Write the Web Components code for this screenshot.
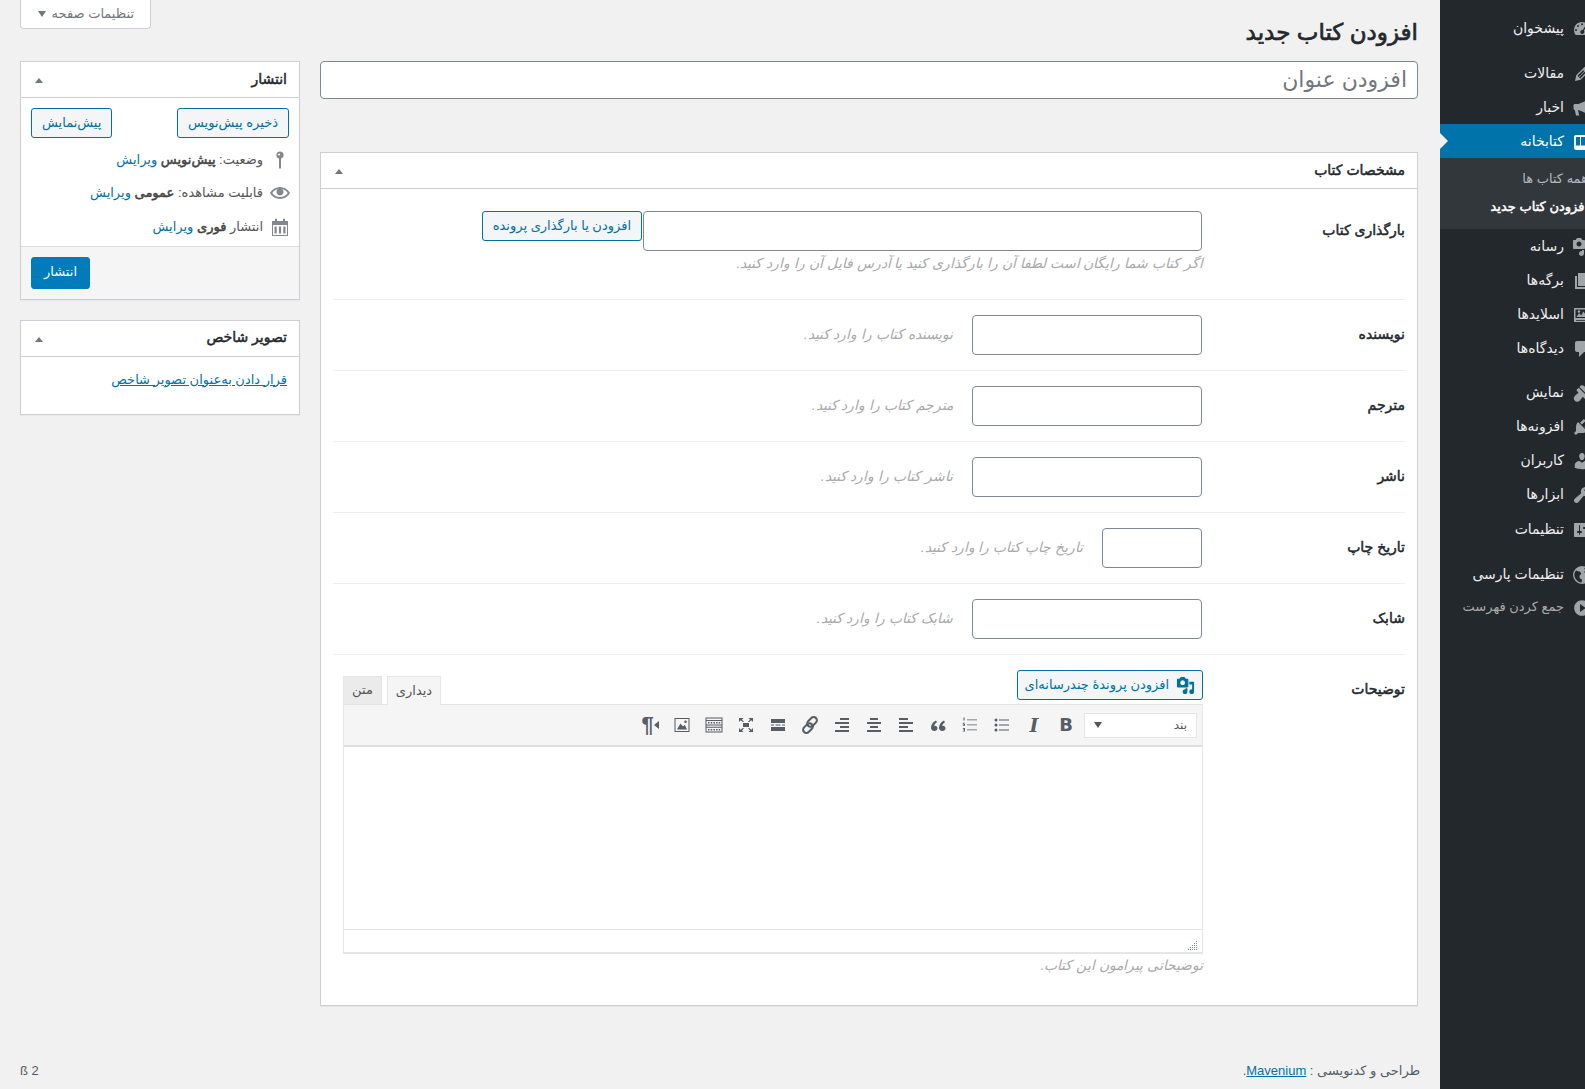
<!DOCTYPE html>
<html lang="fa">
<head>
<meta charset="utf-8">
<title>افزودن کتاب جدید</title>
<style>
  html, body { margin: 0; padding: 0; background: #f1f1f1; overflow: hidden; }
  body { font: 13px/1.4 "Liberation Sans", "DejaVu Sans", sans-serif; color: #444; }
</style>
</head>
<body>
<wp-app>
  <wp-main slot="main">
    <wp-header slot="header"></wp-header>
    <div slot="wide" class="wide-col">
      <wp-title-box></wp-title-box>
      <wp-postbox heading="مشخصات کتاب">
        <wp-field label="بارگذاری کتاب" first>
          <wp-upload></wp-upload>
        </wp-field>
        <wp-field label="نویسنده"><wp-input width="230" hint="نویسنده کتاب را وارد کنید."></wp-input></wp-field>
        <wp-field label="مترجم"><wp-input width="230" hint="مترجم کتاب را وارد کنید."></wp-input></wp-field>
        <wp-field label="ناشر"><wp-input width="230" hint="ناشر کتاب را وارد کنید."></wp-input></wp-field>
        <wp-field label="تاریخ چاپ"><wp-input width="100" hint="تاریخ چاپ کتاب را وارد کنید."></wp-input></wp-field>
        <wp-field label="شابک"><wp-input width="230" hint="شابک کتاب را وارد کنید."></wp-input></wp-field>
        <wp-field label="توضیحات" last><wp-editor></wp-editor></wp-field>
      </wp-postbox>
    </div>
    <div slot="side" class="side-col">
      <wp-postbox heading="انتشار"><wp-publish></wp-publish></wp-postbox>
      <wp-postbox heading="تصویر شاخص"><wp-thumbnail></wp-thumbnail></wp-postbox>
    </div>
    <wp-footer slot="footer"></wp-footer>
  </wp-main>
  <wp-sidebar slot="side"></wp-sidebar>
</wp-app>

<script>
// dashicon style shapes, all on a 20x20 box
const ICONS = {
  dashboard: '<path fill-rule="evenodd" d="M3.76 16h12.48c1.1-1.37 1.76-3.11 1.76-5 0-4.42-3.58-8-8-8s-8 3.58-8 8c0 1.89.66 3.63 1.76 5zM10 4.2a1 1 0 1 1 0 2 1 1 0 0 1 0-2zM6 6a1 1 0 1 1 0 2 1 1 0 0 1 0-2zM4 10a1 1 0 1 1 0 2 1 1 0 0 1 0-2zm10-4l1 .6-3.2 5a2 2 0 1 1-1-.6z"/>',
  post: '<path fill-rule="evenodd" d="M13.89 3.39l2.71 2.72c.46.46.42 1.24.03 1.64l-8.01 8.02-5.56 1.16 1.16-5.58s7.6-7.63 7.99-8.03c.39-.39 1.22-.39 1.68.07zm-2.73 2.79l-5.59 5.61 1.11 1.11 5.54-5.65zm-2.97 8.23l5.58-5.6-1.07-1.08-5.59 5.6z"/>',
  news: '<path d="M1.500 7.500c0-1 .8-1.500 1.500-1.500h3.500L16 2v14l-9.500-4H6l1.200 5.500H4L2.800 12H3c-.8 0-1.500-.7-1.500-1.500z"/>',
  book: '<path fill-rule="evenodd" d="M2 5c0-1.100.9-2 2-2h16v15H4c-1.100 0-2-.9-2-2zm2 0v8.500h4V5zm5 0v8.500h11V5z"/>',
  media: '<path fill-rule="evenodd" d="M13 11V4c0-.55-.45-1-1-1h-1.67L9 1H5L3.67 3H2c-.55 0-1 .45-1 1v7c0 .55.45 1 1 1h10c.55 0 1-.45 1-1zM7 4.5c1.38 0 2.5 1.12 2.5 2.5S8.38 9.5 7 9.5 4.5 8.38 4.5 7 5.62 4.5 7 4.5zM14 6h5v10.5c0 1.38-1.12 2.5-2.5 2.5S14 17.88 14 16.5s1.12-2.5 2.5-2.5c.17 0 .34.02.5.05V9h-3V6zm-4 8.05V13h2v3.5c0 1.38-1.12 2.5-2.5 2.5S7 17.88 7 16.5 8.12 14 9.5 14c.17 0 .34.02.5.05z"/>',
  page: '<path d="M6 15V2h10v13H6zm-1 1h8v2H3V5h2v11z"/>',
  slides: '<path fill-rule="evenodd" d="M2 3h16v14H2zm1.500 1.500v8.500h13V4.500zM4.500 12l2.600-4 2 2.400 2.400-3.900 3.600 5.500zM7 5.200a1.300 1.300 0 1 1 0 2.600 1.300 1.300 0 0 1 0-2.600zM4 15h12v.8H4z"/>',
  comment: '<path d="M5 2h9c1.1 0 2 .9 2 2v7c0 1.1-.9 2-2 2h-2l-5 5v-5H5c-1.1 0-2-.9-2-2V4c0-1.1.9-2 2-2z"/>',
  brush: '<path d="M14.48 11.06L7.41 3.99l1.5-1.5c.5-.56 2.3-.47 3.54.77 1.24 1.25 1.35 3.03.77 3.54l1.26 4.26zm-.71.71L6.7 4.7 4.93 6.47c-.39.39-.39 1.02 0 1.41l1.06 1.06c.39.39.39 1.03 0 1.42-.6.6-1.43 1.11-2.21 1.69-.35.26-.7.53-1.01.84-1.34 1.34-1.34 3.61 0 4.95 1.34 1.34 3.61 1.34 4.95 0 .31-.31.58-.66.84-1.01.58-.78 1.09-1.61 1.69-2.21.39-.39 1.03-.39 1.42 0l1.06 1.06c.39.39 1.02.39 1.41 0z"/>',
  plugin: '<path d="M13.11 4.36L9.87 7.6 8 5.73l3.24-3.24c.35-.34 1.05-.2 1.56.32.52.51.66 1.21.31 1.55zm-8 1.77l.91-1.12 9.01 9.01-1.19.84c-.71.71-2.63 1.16-3.82 1.16H6.14L4.9 17.26c-.59.59-1.54.59-2.12 0-.59-.58-.59-1.53 0-2.12l1.24-1.24v-3.88c0-1.13.4-3.19 1.09-3.89zm7.26 3.97l3.24-3.24c.34-.35 1.04-.21 1.55.31.52.51.66 1.21.31 1.55l-3.24 3.25z"/>',
  users: '<path d="M10 9.25c-2.27 0-2.73-3.44-2.73-3.44C7 4.02 7.82 2 9.97 2c2.16 0 2.98 2.02 2.71 3.81 0 0-.41 3.44-2.68 3.44zm0 2.57L12.72 10c2.39 0 4.52 2.33 4.52 4.53v2.49s-3.65 1.13-7.24 1.13c-3.65 0-7.24-1.13-7.24-1.13v-2.49c0-2.25 1.94-4.48 4.47-4.48z"/>',
  tools: '<path d="M16.68 9.77c-1.34 1.34-3.3 1.67-4.95.99l-5.41 6.52c-.99.99-2.59.99-3.58 0s-.99-2.59 0-3.57l6.52-5.42c-.68-1.65-.35-3.61.99-4.95 1.28-1.28 3.12-1.62 4.72-1.06l-2.89 2.89 2.82 2.82 2.86-2.87c.53 1.58.18 3.39-1.08 4.67z"/>',
  settings: '<path fill-rule="evenodd" d="M18 16V4c0-.55-.45-1-1-1H3c-.55 0-1 .45-1 1v12c0 .55.45 1 1 1h14c.55 0 1-.45 1-1zM8 11h1c.55 0 1 .45 1 1s-.45 1-1 1H8v1.5c0 .28-.22.5-.5.5s-.5-.22-.5-.5V13H6c-.55 0-1-.45-1-1s.45-1 1-1h1V5.5c0-.28.22-.5.5-.5s.5.22.5.5V11zm5-2h-1c-.55 0-1-.45-1-1s.45-1 1-1h1V5.5c0-.28.22-.5.5-.5s.5.22.5.5V7h1c.55 0 1 .45 1 1s-.45 1-1 1h-1v5.5c0 .28-.22.5-.5.5s-.5-.22-.5-.5V9z"/>',
  globe: '<path fill-rule="evenodd" d="M10 1a9 9 0 1 1 0 18 9 9 0 0 1 0-18zM4 5.5c1.400.4 2.400 1.100 4 1.100l1.300 2.100-2 2.300.7 2.500 2 1-.5 3.200C6 17 2.400 14 2.400 10c0-1.700.6-3.200 1.600-4.500zM12 3l1.500 2.500L12 7l2.500 2 3-.5C17 6 15 3.800 12 3zm1 9l2.500-.5.5 3-2.500 2z"/>',
  collapse: '<path fill-rule="evenodd" d="M10 2.160c4.330 0 7.840 3.510 7.840 7.840s-3.510 7.840-7.840 7.840S2.160 14.330 2.160 10 5.710 2.160 10 2.160zM8 13.880V6.120L13.820 9.970z"/>',
  pin: '<path fill-rule="evenodd" d="M10 1.500a3.600 3.600 0 0 1 1 7.060V18.500H9V8.560A3.600 3.600 0 0 1 10 1.500zM9 3.500a1 1 0 1 0 0 2 1 1 0 0 0 0-2z"/>',
  eye: '<path d="M19.7 9.400C17.700 6 14 3.900 10 3.900S2.300 6 .3 9.400L0 10l.3.6c2 3.400 5.700 5.500 9.700 5.500s7.700-2.100 9.700-5.500l.3-.6-.3-.6zM10 14.100c-3.100 0-6-1.600-7.700-4.100C3.600 8 5.700 6.600 8 6.100c-.9.6-1.500 1.700-1.500 2.900 0 1.900 1.600 3.500 3.500 3.500s3.500-1.600 3.500-3.500c0-1.200-.6-2.300-1.500-2.900 2.300.5 4.400 1.900 5.700 3.900-1.700 2.500-4.600 4.100-7.700 4.100z"/>',
  calendar: '<path fill-rule="evenodd" d="M2 4h3V2.500a1 1 0 0 1 2 0V4h6V2.500a1 1 0 0 1 2 0V4h3v15H2zM3 8v10h14V8zM4.500 9.500h2.200v7H4.500zm4.400 0h2.200v7H8.900zm4.400 0h2.200v7h-2.200z"/>',
  alignleft: '<path d="M12 5V3H3v2h9zm5 4V7H3v2h14zm-5 4v-2H3v2h9zm5 4v-2H3v2h14z"/>',
  aligncenter: '<path d="M14 5V3H6v2h8zm3 4V7H3v2h14zm-3 4v-2H6v2h8zm3 4v-2H3v2h14z"/>',
  alignright: '<path d="M17 3H8v2h9V3zm0 4H3v2h14V7zm0 4H8v2h9v-2zm0 4H3v2h14v-2z"/>',
  quote: '<path d="M9.500 13.300c0-1.400-1.100-2.500-2.500-2.500-.3 0-.6.050-.9.150.3-1.400 1.300-2.800 2.900-3.700L8 5.500C5 7 3 9.700 3 12.700 3 14.600 4.400 16 6.300 16c1.800 0 3.200-1.200 3.200-2.700zm8 0c0-1.400-1.100-2.500-2.500-2.500-.3 0-.6.050-.9.150.3-1.400 1.300-2.800 2.900-3.700L16 5.500c-3 1.500-5 4.200-5 7.200 0 1.900 1.400 3.300 3.300 3.300 1.800 0 3.200-1.200 3.200-2.700z"/>',
  ul: '<circle cx="4" cy="5" r="1.500"/><circle cx="4" cy="10" r="1.500"/><circle cx="4" cy="15" r="1.500"/><path d="M7 4.400h10v1.200H7zm0 5h10v1.200H7zm0 5h10v1.200H7z"/>',
  ol: '<path d="M3.500 2.500h1v3h-1zm-.7 5.300h2v.7H3.700v.5h1.300v1.700H2.800v-.7h1.200v-.4H2.800zm0 5.200H5v3.500H2.800v-.7H4v-.7H3v-.6h1v-.7H2.800z"/><path d="M7 4.500h10v.8H7zm0 5h10v.8H7zm0 5h10v.8H7z"/>',
  link: '<g fill="none" stroke="currentColor" stroke-width="2"><rect x="8.700" y="1.400" width="6.500" height="11" rx="3.250" transform="rotate(45 12 7)"/><rect x="4.800" y="7.600" width="6.500" height="11" rx="3.250" transform="rotate(45 8 13)"/></g>',
  more: '<path d="M3 4h14v4H3zm0 8h14v4H3zM3 9.500h3v1H3zm4.500 0h5v1h-5zm6.500 0h3v1h-3z"/>',
  fullscreen: '<path d="M7 8h6v4H7zM3 3h4.500L6 4.500l2 2.500H6.800L4.700 5.200 3 7zm14 0v4l-1.700-1.800L13.200 7H12l2-2.500L12.500 3zM3 17v-4l1.700 1.800L6.800 13H8l-2 2.500L7.500 17zm14 0h-4.500l1.500-1.500L12 13h1.200l2.100 1.800L17 13z"/>',
  table: '<path fill-rule="evenodd" d="M1.500 2.500h17v15h-17zm1 1v1.500h15V3.500zm0 2.500v3.500h15V6zm0 4.500v1.200h15v-1.200zm0 2.200v3.800h15v-3.800zM4 7h1.500v1.500H4zm2.700 0h1.500v1.500H6.700zm2.700 0h1.500v1.500H9.400zm2.700 0h1.500v1.500h-1.500zm2.600 0h1.500v1.500h-1.500zM4 14h1.500v1.500H4zm2.700 0h1.500v1.500H6.700zm2.700 0h1.500v1.500H9.400zm2.700 0h1.500v1.500h-1.500zm2.600 0h1.500v1.500h-1.500z"/>',
  image: '<path fill-rule="evenodd" d="M2.500 3h15v14h-15zm1 1v12h13V4zM5 14.500l3.500-6 2.500 3 1.800-1.800 2.200 4.800zM13.500 5.500a1.300 1.300 0 1 1 0 2.600 1.300 1.300 0 0 1 0-2.600z"/>'
}

class WpIcon extends HTMLElement {
  static get observedAttributes() { return ['name'] }
  constructor() {
    super()
    this.attachShadow({mode: 'open'})
  }
  render() {
    const size = this.getAttribute('size') || 20
    this.shadowRoot.innerHTML = `
      <style>:host { display: inline-flex; flex: none; } svg { display: block; fill: currentColor; }</style>
      <svg width="${size}" height="${size}" viewBox="0 0 20 20">${ICONS[this.getAttribute('name')] || ''}</svg>`
  }
  connectedCallback() { this.render() }
  attributeChangedCallback() { this.render() }
}
customElements.define('wp-icon', WpIcon)

// the reference's bold is a thickened regular face, so it keeps the regular width
const BOLD = 'font-weight: 400; -webkit-text-stroke: .5px currentColor;'

class WpApp extends HTMLElement {
  constructor() {
    super()
    this.attachShadow({mode: 'open'}).innerHTML = `
      <style>
        :host { display: flex; width: 1585px; height: 1089px; overflow: hidden; background: #f1f1f1; }
        ::slotted(wp-main) { flex: none; width: 1440px; }
        ::slotted(wp-sidebar) { flex: none; width: 160px; }
      </style>
      <slot name="main"></slot><slot name="side"></slot>`
  }
}
customElements.define('wp-app', WpApp)

class WpMain extends HTMLElement {
  constructor() {
    super()
    this.attachShadow({mode: 'open'}).innerHTML = `
      <style>
        :host { display: flex; flex-direction: column; height: 1089px; direction: rtl; }
        .wrap { padding: 0 22px 0 20px; flex: 1; }
        .cols { display: grid; grid-template-columns: 1098px 280px; column-gap: 20px; }
      </style>
      <div class="wrap">
        <slot name="header"></slot>
        <div class="cols"><slot name="wide"></slot><slot name="side"></slot></div>
      </div>
      <slot name="footer"></slot>`
  }
}
customElements.define('wp-main', WpMain)

class WpHeader extends HTMLElement {
  constructor() {
    super()
    this.attachShadow({mode: 'open'}).innerHTML = `
      <style>
        :host { display: flex; justify-content: space-between; align-items: flex-start; height: 61px; }
        h1 { margin: 0; padding-top: 16px; font-size: 23px; line-height: 33px; font-weight: 400; -webkit-text-stroke: .7px currentColor; color: #23282d; }
        .tab { display: flex; align-items: center; gap: 6px; box-sizing: border-box; width: 131px; height: 29px; padding: 0 16px 0 18px;
          background: #fff; border: 1px solid #ccd0d4; border-top: 0; border-radius: 0 0 4px 4px; color: #72777c; font-size: 13px; white-space: nowrap; }
        .tab i { margin-right: auto; width: 0; height: 0; border: 4px solid transparent; border-top: 6px solid #72777c; border-bottom: 0; }
      </style>
      <h1>افزودن کتاب جدید</h1>
      <div class="tab"><span>تنظیمات صفحه</span><i></i></div>`
  }
}
customElements.define('wp-header', WpHeader)

class WpTitleBox extends HTMLElement {
  constructor() {
    super()
    this.attachShadow({mode: 'open'}).innerHTML = `
      <style>
        :host { display: block; box-sizing: border-box; height: 38px; margin-bottom: 53px; padding: 0 10px; background: #fff;
          border: 1px solid #7e8993; border-radius: 4px; font-size: 22px; line-height: 36px; color: #72777c; }
      </style>افزودن عنوان`
  }
}
customElements.define('wp-title-box', WpTitleBox)

class WpPostbox extends HTMLElement {
  constructor() {
    super()
    this.attachShadow({mode: 'open'}).innerHTML = `
      <style>
        :host { display: block; background: #fff; border: 1px solid #ccd0d4; box-shadow: 0 1px 1px rgba(0,0,0,.04); margin-bottom: 20px; }
        header { display: flex; justify-content: space-between; align-items: center; height: 35px; padding: 0 12px 0 14px;
          border-bottom: 1px solid #ccd0d4; font-size: 14px; color: #23282d; }
        span { ${BOLD} }
        i { width: 0; height: 0; border: 4px solid transparent; border-bottom: 5px solid #72777c; border-top: 0; margin-top: 2px; }
      </style>
      <header><span id="t"></span><i></i></header>
      <slot></slot>`
  }
  connectedCallback() {
    this.shadowRoot.getElementById('t').textContent = this.getAttribute('heading')
  }
}
customElements.define('wp-postbox', WpPostbox)

class WpField extends HTMLElement {
  constructor() {
    super()
    this.attachShadow({mode: 'open'}).innerHTML = `
      <style>
        :host { display: grid; grid-template-columns: 202px 1fr; margin: 0 12px; padding: 15px 0; border-bottom: 1px solid #eee; min-height: 40px; }
        :host([first]) { padding: 22px 0 0; min-height: 88px; }
        :host([last]) { border-bottom: 0; padding: 15px 0 0; }
        label { font-size: 14px; ${BOLD} color: #23282d; line-height: 38px; }
        :host([last]) label { line-height: 38px; }
      </style>
      <label id="l"></label><div><slot></slot></div>`
  }
  connectedCallback() {
    this.shadowRoot.getElementById('l').textContent = this.getAttribute('label')
  }
}
customElements.define('wp-field', WpField)

const FIELD_CSS = `
  .box { box-sizing: border-box; height: 40px; margin: 0 1px; background: #fff; border: 1px solid #7e8993; border-radius: 4px; display: block; padding: 0 8px; font: inherit; outline: none; }
  .hint { font-style: italic; color: #aaa; font-size: 13.9px; }
`

class WpInput extends HTMLElement {
  constructor() {
    super()
    this.attachShadow({mode: 'open'}).innerHTML = `
      <style>
        :host { display: flex; align-items: center; gap: 18px; height: 40px; }
        ${FIELD_CSS}
      </style>
      <input class="box" type="text"><span class="hint"></span>`
  }
  connectedCallback() {
    this.shadowRoot.querySelector('input').style.width = this.getAttribute('width') + 'px'
    this.shadowRoot.querySelector('.hint').textContent = this.getAttribute('hint')
  }
}
customElements.define('wp-input', WpInput)

class WpButton extends HTMLElement {
  constructor() {
    super()
    this.attachShadow({mode: 'open'}).innerHTML = `
      <style>
        :host { display: inline-flex; align-items: center; justify-content: center; gap: 7px; box-sizing: border-box; height: 30px; padding: 0 10px;
          background: #f3f5f6; border: 1px solid #0071a1; border-radius: 3px; color: #0071a1; font-size: 13px; white-space: nowrap; }
        :host([primary]) { background: #007cba; border-color: #007cba; color: #fff; height: 32px; padding: 0 12px; }
        :host([tight]) { padding: 0 7px; }
      </style>
      <slot></slot>`
  }
}
customElements.define('wp-button', WpButton)

class WpUpload extends HTMLElement {
  constructor() {
    super()
    this.attachShadow({mode: 'open'}).innerHTML = `
      <style>
        :host { display: block; }
        .row { display: flex; align-items: flex-start; }
        .hint { line-height: 24px; }
        ${FIELD_CSS}
      </style>
      <div class="row"><input class="box" type="text" style="width:559px"><wp-button>افزودن یا بارگذاری پرونده</wp-button></div>
      <div class="hint">اگر کتاب شما رایگان است لطفا آن را بارگذاری کنید یا آدرس فایل آن را وارد کنید.</div>`
  }
}
customElements.define('wp-upload', WpUpload)

class WpEditor extends HTMLElement {
  constructor() {
    super()
    this.attachShadow({mode: 'open'}).innerHTML = `
      <style>
        :host { display: block; width: 860px; }
        .top { display: flex; justify-content: space-between; align-items: flex-start; height: 34px; }
        .tabs { display: flex; gap: 5px; margin-top: 6px; font-size: 13px; color: #555; }
        .tabs span { display: flex; align-items: center; justify-content: center; box-sizing: border-box; height: 28px; border: 1px solid #e5e5e5; border-bottom: 0; background: #ebebeb; }
        .tabs .on { width: 54px; height: 29px; background: #f5f5f5; position: relative; z-index: 1; }
        .tabs .off { width: 39px; }
        .frame { border: 1px solid #e5e5e5; border-bottom-width: 2px; background: #fff; }
        .bar { display: flex; align-items: center; height: 40px; padding-right: 5px; background: #f5f5f5; border-bottom: 2px solid #dedede; color: #555d66; }
        .sel { display: flex; justify-content: space-between; align-items: center; box-sizing: border-box; width: 113px; height: 25px; padding: 0 9px 0 9px; margin-left: 2px; background: #fff; border: 1px solid #e5e5e5; font-size: 12px; color: #555; }
        .sel i { width: 0; height: 0; border: 4px solid transparent; border-top: 6px solid #555; border-bottom: 0; }
        .btn { display: flex; align-items: center; justify-content: center; width: 32px; height: 30px; }
        .b { font: 700 18px/1 "DejaVu Sans", sans-serif; }
        .it { font: italic 700 19px/1 "DejaVu Serif", serif; }
        .pil { font: 700 22px/1 "Liberation Sans", sans-serif; }
        .pil i { display: inline-block; width: 0; height: 0; border: 4px solid transparent; border-right: 5px solid #555d66; border-left: 0; vertical-align: 3px; }
        .body { height: 182px; }
        .status { display: flex; justify-content: flex-end; align-items: flex-end; direction: ltr; height: 21px; border-top: 1px solid #e5e5e5; padding: 0 4px 1px 0; }
        .hint { line-height: 22px; padding-bottom: 29px; }
        ${FIELD_CSS}
      </style>
      <div class="top">
        <wp-button tight><wp-icon name="media" size="19"></wp-icon><span>افزودن پروندهٔ چندرسانه‌ای</span></wp-button>
        <div class="tabs"><span class="on">دیداری</span><span class="off">متن</span></div>
      </div>
      <div class="frame">
        <div class="bar">
          <div class="sel"><span>بند</span><i></i></div>
          <div class="btn b">B</div>
          <div class="btn it">I</div>
          <div class="btn"><wp-icon name="ul"></wp-icon></div>
          <div class="btn"><wp-icon name="ol"></wp-icon></div>
          <div class="btn"><wp-icon name="quote"></wp-icon></div>
          <div class="btn"><wp-icon name="alignleft"></wp-icon></div>
          <div class="btn"><wp-icon name="aligncenter"></wp-icon></div>
          <div class="btn"><wp-icon name="alignright"></wp-icon></div>
          <div class="btn"><wp-icon name="link"></wp-icon></div>
          <div class="btn"><wp-icon name="more"></wp-icon></div>
          <div class="btn"><wp-icon name="fullscreen"></wp-icon></div>
          <div class="btn"><wp-icon name="table"></wp-icon></div>
          <div class="btn"><wp-icon name="image"></wp-icon></div>
          <div class="btn pil" dir="ltr"><span>¶</span><i></i></div>
        </div>
        <div class="body"></div>
        <div class="status">
          <svg width="10" height="10" viewBox="0 0 10 10" fill="#7a9a7a"><path d="M8 0h1v1H8zM6 2h1v1H6zm2 0h1v1H8zM4 4h1v1H4zm2 0h1v1H6zm2 0h1v1H8zM2 6h1v1H2zm2 0h1v1H4zm2 0h1v1H6zm2 0h1v1H8zM0 8h1v1H0zm2 0h1v1H2zm2 0h1v1H4zm2 0h1v1H6zm2 0h1v1H8z"/></svg>
        </div>
      </div>
      <div class="hint">توضیحاتی پیرامون این کتاب.</div>`
  }
}
customElements.define('wp-editor', WpEditor)

class WpPublish extends HTMLElement {
  constructor() {
    super()
    this.attachShadow({mode: 'open'}).innerHTML = `
      <style>
        :host { display: block; font-size: 13px; color: #555; }
        .btns { display: flex; justify-content: space-between; padding: 10px 10px 5px; }
        .row { display: flex; align-items: center; gap: 7px; height: 33.5px; padding: 0 9px; }
        wp-icon { color: #82878c; }
        b { color: #444; ${BOLD} }
        a { color: #0073aa; text-decoration: none; }
        .actions { display: flex; justify-content: flex-end; margin-top: 2px; padding: 10px; background: #f5f5f5; border-top: 1px solid #ddd; height: 32px; }
      </style>
      <div class="btns"><wp-button>ذخیره پیش‌نویس</wp-button><wp-button>پیش‌نمایش</wp-button></div>
      <div class="row"><wp-icon name="pin"></wp-icon><span>وضعیت: <b>پیش‌نویس</b> <a href="#">ویرایش</a></span></div>
      <div class="row"><wp-icon name="eye"></wp-icon><span>قابلیت مشاهده: <b>عمومی</b> <a href="#">ویرایش</a></span></div>
      <div class="row"><wp-icon name="calendar"></wp-icon><span>انتشار <b>فوری</b> <a href="#">ویرایش</a></span></div>
      <div class="actions"><wp-button primary>انتشار</wp-button></div>`
  }
}
customElements.define('wp-publish', WpPublish)

class WpThumbnail extends HTMLElement {
  constructor() {
    super()
    this.attachShadow({mode: 'open'}).innerHTML = `
      <style>
        :host { display: block; padding: 13px 12px 24px; line-height: 20px; }
        a { color: #0073aa; }
      </style>
      <a href="#">قرار دادن به‌عنوان تصویر شاخص</a>`
  }
}
customElements.define('wp-thumbnail', WpThumbnail)

class WpFooter extends HTMLElement {
  constructor() {
    super()
    this.attachShadow({mode: 'open'}).innerHTML = `
      <style>
        :host { display: flex; justify-content: space-between; align-items: center; box-sizing: border-box; height: 38px; padding: 2px 20px 0; color: #555d66; font-size: 13px; }
        a { color: #0073aa; }
      </style>
      <span>طراحی و کدنویسی : <a href="#">Mavenium</a>.</span><span>2 ß</span>`
  }
}
customElements.define('wp-footer', WpFooter)

class WpMenuItem extends HTMLElement {
  constructor() {
    super()
    this.attachShadow({mode: 'open'}).innerHTML = `
      <style>
        :host { display: flex; align-items: center; box-sizing: border-box; height: 34px; padding-top: 1px; position: relative; font-size: 14px; color: #eee; }
        :host([sep]) { margin-bottom: 11px; }
        :host([current]) { background: #0073aa; color: #fff; }
        :host([muted]) { color: #aaa; font-size: 13px; height: 32px; }
        .ic { display: flex; justify-content: flex-start; width: 36px; padding-right: 8px; box-sizing: border-box; color: #a0a5aa; }
        :host([current]) .ic { color: #fff; }
        :host([current])::after { content: ""; position: absolute; left: 0; top: 9px; border: 8px solid transparent; border-left-color: #f1f1f1; border-right: 0; }
      </style>
      <div class="ic"><wp-icon></wp-icon></div><span><slot></slot></span>`
  }
  connectedCallback() {
    this.shadowRoot.querySelector('wp-icon').setAttribute('name', this.getAttribute('icon'))
  }
}
customElements.define('wp-menu-item', WpMenuItem)

class WpSidebar extends HTMLElement {
  constructor() {
    super()
    this.attachShadow({mode: 'open'}).innerHTML = `
      <style>
        :host { display: block; background: #23282d; direction: rtl; padding-top: 11px; height: 1078px; }
        .sub { background: #32373c; padding: 7px 12px 8px 0; font-size: 13px; color: #b4b9be; white-space: nowrap; }
        .sub div { line-height: 28px; }
        .sub .on { color: #fff; ${BOLD} }
      </style>
      <wp-menu-item icon="dashboard" sep>پیشخوان</wp-menu-item>
      <wp-menu-item icon="post">مقالات</wp-menu-item>
      <wp-menu-item icon="news">اخبار</wp-menu-item>
      <wp-menu-item icon="book" current>کتابخانه</wp-menu-item>
      <div class="sub"><div>همه کتاب ها</div><div class="on">افزودن کتاب جدید</div></div>
      <wp-menu-item icon="media">رسانه</wp-menu-item>
      <wp-menu-item icon="page">برگه‌ها</wp-menu-item>
      <wp-menu-item icon="slides">اسلایدها</wp-menu-item>
      <wp-menu-item icon="comment" sep style="margin-bottom:10px">دیدگاه‌ها</wp-menu-item>
      <wp-menu-item icon="brush">نمایش</wp-menu-item>
      <wp-menu-item icon="plugin">افزونه‌ها</wp-menu-item>
      <wp-menu-item icon="users">کاربران</wp-menu-item>
      <wp-menu-item icon="tools" style="margin-bottom:1px">ابزارها</wp-menu-item>
      <wp-menu-item icon="settings" sep>تنظیمات</wp-menu-item>
      <wp-menu-item icon="globe">تنظیمات پارسی</wp-menu-item>
      <wp-menu-item icon="collapse" muted>جمع کردن فهرست</wp-menu-item>`
  }
}
customElements.define('wp-sidebar', WpSidebar)
</script>
</body>
</html>
